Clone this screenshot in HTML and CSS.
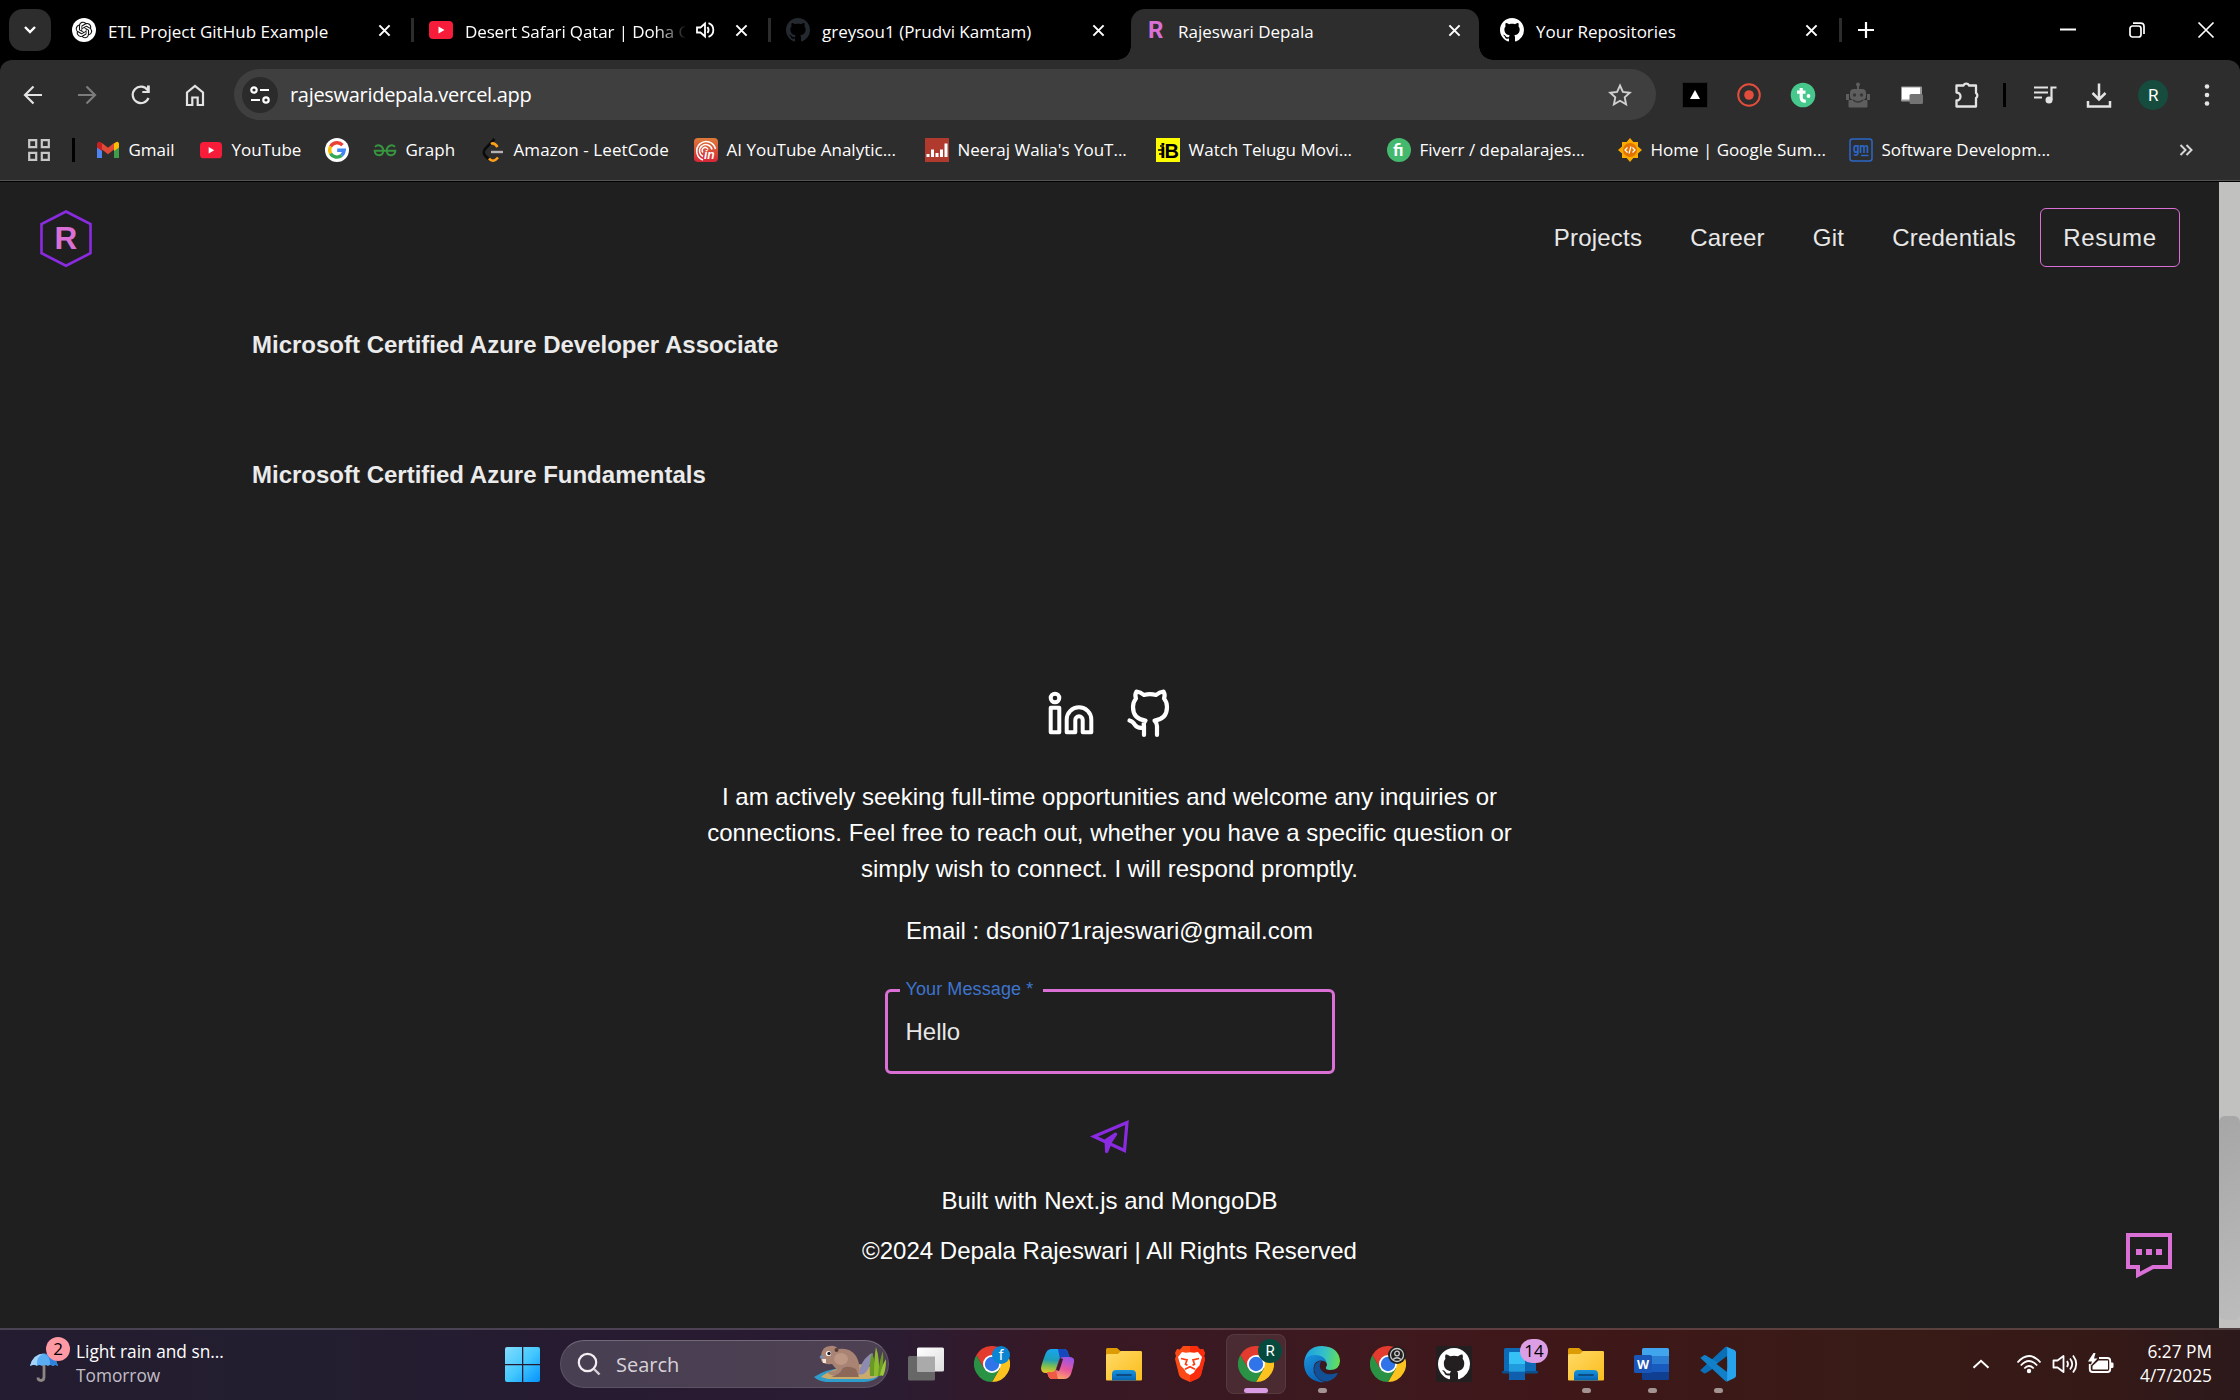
FILE: index.html
```html
<!DOCTYPE html>
<html lang="en">
<head>
<meta charset="utf-8">
<title>Rajeswari Depala</title>
<link rel="stylesheet" href="styles.css">
</head>
<body>
<svg class="sprite" aria-hidden="true">
  <defs>
    <linearGradient id="gFolder" x1="0" y1="0" x2="1" y2="1"><stop offset="0" stop-color="#ffda68"/><stop offset="1" stop-color="#fbbd1c"/></linearGradient>
    <linearGradient id="gBlue" x1="0" y1="0" x2="0" y2="1"><stop offset="0" stop-color="#1a94dc"/><stop offset="1" stop-color="#0663b4"/></linearGradient>
    <linearGradient id="gWin" x1="0" y1="0" x2="1" y2="1"><stop offset="0" stop-color="#83dcfd"/><stop offset=".5" stop-color="#44c8ff"/><stop offset="1" stop-color="#0493fb"/></linearGradient>
  </defs>
  <symbol id="x" viewBox="0 0 14 14"><path d="M1.500 1.500l11 11M12.500 1.500l-11 11" stroke="currentColor" stroke-width="2.200" fill="none"/></symbol>
  <symbol id="yt" viewBox="0 0 24 18"><rect width="24" height="18" rx="4" fill="#f61c3a"/><path d="M9.500 5.500l6 3.500-6 3.500z" fill="#fff"/></symbol>
  <symbol id="gh" viewBox="0 0 16 16"><path fill="currentColor" d="M8 0C3.580 0 0 3.580 0 8c0 3.540 2.290 6.530 5.470 7.590.4.070.55-.17.55-.38 0-.19-.01-.82-.01-1.490-2.010.37-2.530-.49-2.690-.94-.09-.23-.48-.94-.82-1.130-.28-.15-.68-.52-.01-.53.63-.01 1.080.58 1.230.82.72 1.210 1.870.87 2.330.66.07-.52.28-.87.51-1.070-1.780-.2-3.640-.89-3.640-3.950 0-.87.31-1.590.82-2.150-.08-.2-.36-1.020.08-2.120 0 0 .67-.21 2.200.82.64-.18 1.320-.27 2-.27s1.360.09 2 .27c1.530-1.040 2.200-.82 2.200-.82.44 1.100.16 1.920.08 2.120.51.56.82 1.270.82 2.150 0 3.070-1.870 3.750-3.650 3.950.29.25.54.73.54 1.480 0 1.070-.01 1.930-.01 2.200 0 .21.15.46.55.38A8.010 8.010 0 0 0 16 8c0-4.420-3.580-8-8-8z"/></symbol>
  <symbol id="chrome" viewBox="0 0 36 36">
    <path d="M18 9 H33.600 A18 18 0 0 1 18 36 L25.800 22.500Z" fill="#fcc31e"/>
    <path d="M2.400 9 A18 18 0 0 0 18 36 L25.800 22.500 L18 18 L10.200 22.500 Z" fill="#2a9245"/>
    <path d="M2.400 9 A18 18 0 0 1 33.600 9 H18 L10.200 22.500Z" fill="#e33b2e"/>
    <circle cx="18" cy="18" r="9" fill="#fff"/><circle cx="18" cy="18" r="7.200" fill="#2f74e8"/>
  </symbol>
  <symbol id="folder" viewBox="0 0 36 36"><path d="M0 3.500Q0 2 1.500 2H11l3.500 3H34.500Q36 5 36 6.500V12H0z" fill="#dd9b04"/><path d="M0 9.500Q0 8 1.500 8H12l3-3H34.500Q36 5 36 6.500V33.500Q36 34.500 35 34.500H1Q0 34.500 0 33.500z" fill="url(#gFolder)"/><path d="M6 34.500V28q0-4 4-4H26q4 0 4 4v6.500z" fill="url(#gBlue)"/><path d="M11 29H25" stroke="#0b4c85" stroke-width="1.800" stroke-linecap="round"/></symbol>
</svg>

<header class="tabstrip">
  <button class="tabsearch"><svg width="14" height="10" viewBox="0 0 14 10"><path d="M2 2l5 5 5-5" fill="none" stroke="#fff" stroke-width="2.400"/></svg></button>
  <div class="tab">
    <svg class="fav" viewBox="0 0 24 24"><circle cx="12" cy="12" r="12" fill="#fff"/><path transform="translate(3.700 3.700) scale(.69)" fill="#111" d="M22.2819 9.8211a5.9847 5.9847 0 0 0-.5157-4.9108 6.0462 6.0462 0 0 0-6.5098-2.9A6.0651 6.0651 0 0 0 4.9807 4.1818a5.9847 5.9847 0 0 0-3.9977 2.9 6.0462 6.0462 0 0 0 .7427 7.0966 5.98 5.98 0 0 0 .511 4.9107 6.051 6.051 0 0 0 6.5146 2.9001A5.9847 5.9847 0 0 0 13.2599 24a6.0557 6.0557 0 0 0 5.7718-4.2058 5.9894 5.9894 0 0 0 3.9977-2.9001 6.0557 6.0557 0 0 0-.7475-7.0729zm-9.022 12.6081a4.4755 4.4755 0 0 1-2.8764-1.0408l.1419-.0804 4.7783-2.7582a.7948.7948 0 0 0 .3927-.6813v-6.7369l2.02 1.1686a.071.071 0 0 1 .038.052v5.5826a4.504 4.504 0 0 1-4.4945 4.4944zm-9.6607-4.1254a4.4708 4.4708 0 0 1-.5346-3.0137l.142.0852 4.783 2.7582a.7712.7712 0 0 0 .7806 0l5.8428-3.3685v2.3324a.0804.0804 0 0 1-.0332.0615L9.74 19.9502a4.4992 4.4992 0 0 1-6.1408-1.6464zM2.3408 7.8956a4.485 4.485 0 0 1 2.3655-1.9728V11.6a.7664.7664 0 0 0 .3879.6765l5.8144 3.3543-2.0201 1.1685a.0757.0757 0 0 1-.071 0l-4.8303-2.7865A4.504 4.504 0 0 1 2.3408 7.872zm16.5963 3.8558L13.1038 8.364 15.1192 7.2a.0757.0757 0 0 1 .071 0l4.8303 2.7913a4.4944 4.4944 0 0 1-.6765 8.1042v-5.6772a.79.79 0 0 0-.407-.667zm2.0107-3.0231l-.142-.0852-4.7735-2.7818a.7759.7759 0 0 0-.7854 0L9.409 9.2297V6.8974a.0662.0662 0 0 1 .0284-.0615l4.8303-2.7866a4.4992 4.4992 0 0 1 6.6802 4.66zM8.3065 12.863l-2.02-1.1638a.0804.0804 0 0 1-.038-.0567V6.0742a4.4992 4.4992 0 0 1 7.3757-3.4537l-.142.0805L8.704 5.459a.7948.7948 0 0 0-.3927.6813zm1.0976-2.3654l2.602-1.4998 2.6069 1.4998v2.9994l-2.5974 1.4997-2.6067-1.4997Z"/></svg>
    <span class="tabtitle">ETL Project GitHub Example</span><svg class="tx"><use href="#x"/></svg>
  </div>
  <div class="tab sep">
    <svg class="fav"><use href="#yt" y="3" width="24" height="18"/></svg>
    <span class="tabtitle faded">Desert Safari Qatar | Doha C</span>
    <svg class="audio" viewBox="0 0 18 18"><path d="M1 6.500h3.500L9 2.500v13L4.500 11.500H1z" fill="none" stroke="#fff" stroke-width="1.800"/><path d="M11.500 6q2.200 3 0 6M12.500 2.200a7.200 7.200 0 0 1 0 13.600" fill="none" stroke="#fff" stroke-width="1.800"/></svg>
    <svg class="tx"><use href="#x"/></svg>
  </div>
  <div class="tab sep">
    <svg class="fav dim"><use href="#gh"/></svg>
    <span class="tabtitle">greysou1 (Prudvi Kamtam)</span><svg class="tx"><use href="#x"/></svg>
  </div>
  <div class="tab active">
    <span class="fav letter">R</span>
    <span class="tabtitle">Rajeswari Depala</span><svg class="tx"><use href="#x"/></svg>
  </div>
  <div class="tab last">
    <svg class="fav"><use href="#gh"/></svg>
    <span class="tabtitle">Your Repositories</span><svg class="tx"><use href="#x"/></svg>
  </div>
  <button class="newtab"><svg width="16" height="16" viewBox="0 0 16 16"><path d="M8 0v16M0 8h16" stroke="#fff" stroke-width="2.200"/></svg></button>
  <div class="wincontrols">
    <svg viewBox="0 0 16 16"><path d="M0 7.500h16" stroke="#fff" stroke-width="2"/></svg>
    <svg viewBox="0 0 16 16"><g fill="none" stroke="#fff" stroke-width="1.700"><rect x="1" y="4" width="11" height="11" rx="2.500"/><path d="M4 1.200H11.500Q15 1.200 15 4.500V12"/></g></svg>
    <svg viewBox="0 0 16 16"><path d="M.5.500l15 15M15.500.500l-15 15" stroke="#fff" stroke-width="1.700"/></svg>
  </div>
</header>

<div class="chromebar">
  <div class="toolbar">
    <svg viewBox="0 0 24 24"><path d="M21 12H4.500M12.500 3.500L4 12l8.500 8.500" fill="none" stroke="#e3e3e3" stroke-width="2.200"/></svg>
    <svg viewBox="0 0 24 24"><path d="M3 12H19.500M11.500 3.500L20 12l-8.500 8.500" fill="none" stroke="#7c7c7c" stroke-width="2.200"/></svg>
    <svg viewBox="0 0 24 24"><path d="M19.500 15A8.200 8.200 0 1 1 18.500 7" fill="none" stroke="#e3e3e3" stroke-width="2.200"/><path d="M20.800 2.500V10H13.300V8H18V2.500z" fill="#e3e3e3"/></svg>
    <svg viewBox="0 0 24 24"><path d="M4 22V9.500L12 3l8 6.500V22H14.700v-7.500H9.300V22z" fill="none" stroke="#e3e3e3" stroke-width="2.200"/></svg>
    <div class="omnibox">
      <span class="siteinfo"><svg width="20" height="18" viewBox="0 0 20 18"><g fill="none" stroke="#fff" stroke-width="2.200"><circle cx="4" cy="4" r="2.700"/><path d="M10 4h9M1 14h9"/><circle cx="16" cy="14" r="2.700"/></g></svg></span>
      <span class="url">rajeswaridepala.vercel.app</span>
      <svg class="star" viewBox="0 0 24 24"><path d="M12 2.500l2.900 6.400 6.900.8-5.100 4.700 1.400 6.900L12 17.800l-6.100 3.500 1.400-6.900L2.200 9.700l6.900-.8z" fill="none" stroke="#d0d0d0" stroke-width="1.900"/></svg>
    </div>
    <div class="exts">
      <svg viewBox="0 0 26 26"><rect x=".5" y=".5" width="25" height="25" fill="#000" stroke="#252525"/><path d="M13 8l5 9H8z" fill="#fff"/></svg>
      <svg viewBox="0 0 26 26"><circle cx="13" cy="13" r="10.800" fill="none" stroke="#e34d3c" stroke-width="2"/><circle cx="13" cy="13" r="4.800" fill="#e34d3c"/></svg>
      <svg viewBox="0 0 26 26"><circle cx="13" cy="13" r="12.300" fill="#46c78c"/><path d="M11.200 6v9.500q0 4 4.600 3.500M7 10.200h8.500" fill="none" stroke="#fff" stroke-width="3.200"/><circle cx="18.500" cy="14" r="1.900" fill="#fff"/></svg>
      <svg viewBox="0 0 26 26"><g fill="#5e5e5e"><rect x="5" y="7" width="16" height="11" rx="4"/><rect x="3.500" y="18" width="19" height="7.500" rx="1"/><circle cx="13" cy="2.500" r="2"/><path d="M12 3h2v5h-2zM1 12h3v6H1zM22 12h3v6h-3z"/></g><circle cx="9.500" cy="13" r="1.700" fill="#383838"/><circle cx="16.500" cy="13" r="1.700" fill="#383838"/><path d="M8 18q5 4 10 0" fill="none" stroke="#383838" stroke-width="1.500"/></svg>
      <svg viewBox="0 0 26 26"><rect x="2" y="4.500" width="21" height="15" rx="1" fill="#999"/><rect x="3" y="5.500" width="18" height="12" fill="#fff"/><rect x="10.500" y="12" width="13.500" height="10" rx="1.500" fill="#737373"/></svg>
      <svg viewBox="0 0 26 26"><path d="M3.500 3.500H10.500a3 3 0 0 1 5.500 0H23V11a3 3 0 0 1 0 5V24.500H3.500V18.500a4 4 0 0 0 0-8z" fill="none" stroke="#e3e3e3" stroke-width="2.300" stroke-linejoin="round"/></svg>
      <i class="vline"></i>
      <svg viewBox="0 0 26 26"><path d="M2 5.500h14M2 10.500h14M2 15.500h8M19.500 18V5.500H24.500" fill="none" stroke="#e3e3e3" stroke-width="2.200"/><circle cx="17" cy="18" r="3.500" fill="#e3e3e3"/></svg>
      <svg viewBox="0 0 26 26"><path d="M13 1.500V17M6.500 11l6.500 6.500 6.500-6.500M2 19v5.500h22V19" fill="none" stroke="#e3e3e3" stroke-width="2.500"/></svg>
      <span class="avatar">R</span>
      <svg viewBox="0 0 26 26"><g fill="#e3e3e3"><circle cx="13" cy="4.500" r="2.300"/><circle cx="13" cy="13" r="2.300"/><circle cx="13" cy="21.500" r="2.300"/></g></svg>
    </div>
  </div>
  <nav class="bookmarks">
    <svg class="apps" viewBox="0 0 22 22"><g fill="none" stroke="#c8c8c8" stroke-width="2.200"><path d="M1.200 1.200h7v7h-7zM13.800 1.200h7v7h-7zM1.200 13.800h7v7h-7zM13.800 13.800h7v7h-7z"/></g></svg>
    <i class="vline"></i>
    <a class="bm w-gmail"><svg viewBox="0 0 24 24"><path d="M1 6v14h5V10z" fill="#4f83f1"/><path d="M23 6v14h-5V10z" fill="#3f9c4b"/><path d="M18 10V5.500q4-3.500 5 0V9.500L18 13z" fill="#fbbc04"/><path d="M6 5l6 4.700L18 5v6.500l-6 4.700-6-4.700z" fill="#e04a37"/><path d="M1 9.500V6q1-4 5-1v8z" fill="#c5221f"/></svg><span>Gmail</span></a>
    <a class="bm w-yt"><svg viewBox="0 0 24 24"><use href="#yt" y="4" width="24" height="16.500"/></svg><span>YouTube</span></a>
    <a class="bm w-g"><svg viewBox="0 0 24 24"><circle cx="12" cy="12" r="12" fill="#fff"/><g fill="none" stroke-width="3.400"><path d="M17.500 7.200A7.300 7.300 0 0 0 5.600 8.500" stroke="#ea4335"/><path d="M5.600 8.500a7.300 7.300 0 0 0 0 7" stroke="#fbbc05"/><path d="M5.600 15.500a7.300 7.300 0 0 0 11 1.900" stroke="#34a853"/><path d="M16.600 17.400A7.300 7.300 0 0 0 19.200 12.200H12.200" stroke="#4285f4"/></g></svg></a>
    <a class="bm w-graph"><svg viewBox="0 0 24 24"><g fill="none" stroke="#37953f" stroke-width="1.900"><path d="M2 8.800Q4 6.800 6.500 7.500 10.800 9 10.300 13.500 9.500 17.300 6 17.300 2 17.200 1.600 12.700H22.400Q22 17.200 18 17.300 14.500 17.300 13.700 13.500 13.200 9 17.500 7.500 20 6.800 22 8.800"/></g></svg><span>Graph</span></a>
    <a class="bm w-leet"><svg viewBox="0 0 24 24"><path d="M13.500 1L4 11q-2.500 3.500 0 6.500l4 4" fill="none" stroke="#0b0b0b" stroke-width="2.600"/><path d="M10 6q3-2 6.500 3M8 20.500q4 5 9-1" fill="none" stroke="#ffa116" stroke-width="2.600"/><path d="M10 14h12" stroke="#b3b3b3" stroke-width="2.400"/></svg><span>Amazon - LeetCode</span></a>
    <a class="bm w-ai"><svg viewBox="0 0 24 24"><defs><linearGradient id="gAi" x1="0" y1="0" x2="0" y2="1"><stop offset="0" stop-color="#dd7a3a"/><stop offset="1" stop-color="#d72638"/></linearGradient></defs><rect width="24" height="24" rx="4" fill="url(#gAi)"/><g fill="none" stroke="#fff" stroke-width="1.500"><path d="M9 22A9.500 9.500 0 1 1 21.500 11M9 18.500a6.300 6.300 0 1 1 9-7M9 14.500a3 3 0 1 1 5-3"/></g><text x="10" y="21" font-size="12" font-weight="700" font-style="italic" fill="#fff" font-family="Liberation Sans, sans-serif">in</text></svg><span>AI YouTube Analytic...</span></a>
    <a class="bm w-n"><svg viewBox="0 0 24 24"><rect width="24" height="24" fill="#b03a2e"/><path d="M1.500 16h3v3h-3zM6 11.500h3V19H6zM10.500 15h3v4h-3zM15 11.500h3V19h-3zM19.500 5.500h3V19h-3z" fill="#fff"/></svg><span>Neeraj Walia's YouT...</span></a>
    <a class="bm w-n"><svg viewBox="0 0 24 24"><rect width="24" height="24" fill="#fdfd00"/><text x="4" y="19.500" font-size="20" font-weight="700" textLength="19" font-family="Liberation Sans, sans-serif">iB</text><path d="M4 8h4M2 12h5M3 16h4" stroke="#000" stroke-width="1.600"/></svg><span>Watch Telugu Movi...</span></a>
    <a class="bm w-n"><svg viewBox="0 0 24 24"><circle cx="12" cy="12" r="12" fill="#44b96e"/><text x="6" y="18" font-size="17" font-weight="900" textLength="12" fill="#fff" font-family="Lato, sans-serif">fi</text></svg><span>Fiverr / depalarajes...</span></a>
    <a class="bm w-n"><svg viewBox="0 0 24 24"><path d="M12 0l3.400 4H20v4.600L24 12l-4 3.400V20h-4.600L12 24l-3.400-4H4v-4.600L0 12l4-3.400V4h4.600z" fill="#f9ab00"/><circle cx="12" cy="12" r="7" fill="#e37400"/><path d="M9.500 9.500L7 12l2.500 2.500M14.500 9.500L17 12l-2.500 2.500M13 8.500l-2 7" fill="none" stroke="#fff" stroke-width="1.200"/></svg><span>Home | Google Sum...</span></a>
    <a class="bm w-gm"><svg viewBox="0 0 24 24"><rect x="1" y="1" width="22" height="22" rx="2.500" fill="none" stroke="#2b67c6" stroke-width="1.500"/><text x="4" y="14.500" font-size="14" font-weight="700" textLength="16" lengthAdjust="spacingAndGlyphs" fill="#2b67c6" font-family="Roboto, sans-serif">gm</text><path d="M12 17.500h7.500" stroke="#2b67c6" stroke-width="1.500"/></svg><span>Software Developm...</span></a>
    <svg class="more" viewBox="0 0 14 12"><path d="M1.500 1l5 5-5 5M7.500 1l5 5-5 5" fill="none" stroke="#d8d8d8" stroke-width="2"/></svg>
  </nav>
</div>

<div class="viewport">
  <main class="page">
    <div class="sitenav">
      <svg class="logo" viewBox="0 0 54 60"><path d="M27 3.500L51.500 16V45.200L27 57.700L2.500 45.200V16z" fill="none" stroke="#8a2be2" stroke-width="2.600"/><text x="26.800" y="40.500" text-anchor="middle" font-family="Liberation Sans, Arial, sans-serif" font-weight="700" font-size="31.500" fill="#da70d6">R</text></svg>
      <div class="links"><a>Projects</a><a>Career</a><a>Git</a><a>Credentials</a><a class="resume">Resume</a></div>
    </div>
    <section class="certs">
      <h3>Microsoft Certified Azure Developer Associate</h3>
      <h3>Microsoft Certified Azure Fundamentals</h3>
    </section>
    <section class="contact">
      <div class="social">
        <svg width="46" height="44" viewBox="0 0 46 44"><g fill="none" stroke="#fff" stroke-width="4" stroke-linejoin="round"><circle cx="7" cy="7" r="4.300"/><path d="M2.700 16.700h8.600V41.300H2.700zM18.700 41.300V28.500a12.300 12.300 0 0 1 24.600 0V41.300H34.700V29a3.700 3.700 0 0 0-7.400 0V41.300z"/></g></svg>
        <svg width="46" height="48" viewBox="0 0 46 48"><path d="M18 46V37q-1-3 1.500-5.500Q7 30 7 18q0-5 3-8.500Q8.500 6 10.500 2.500q4 .5 7.500 3.500 6-1.600 12 0 3.500-3 7.500-3.500 2 3.500.5 7 3 3.500 3 8.500 0 12-12.500 13.500Q31 34 31 37v9M18 38.500q-6 1.500-9-2.500-2-3.500-5.500-4.500" fill="none" stroke="#fff" stroke-width="4.200" stroke-linecap="round" stroke-linejoin="round"/></svg>
      </div>
      <p class="blurb">I am actively seeking full-time opportunities and welcome any inquiries or<br>connections. Feel free to reach out, whether you have a specific question or<br>simply wish to connect. I will respond promptly.</p>
      <p class="email">Email : dsoni071rajeswari@gmail.com</p>
      <div class="field"><span class="label">Your Message *</span><span class="value">Hello</span></div>
      <svg class="send" viewBox="0 0 40 36"><path d="M4 17.500L37 3.500L34.500 31.500z" fill="none" stroke="#8a2be2" stroke-width="3.200"/><path d="M14.500 20.500L25 13.500q3 0 2 2.500L22 23.500 18 33.500q-2 1.500-3-.5z" fill="#8a2be2"/></svg>
      <p class="built">Built with Next.js and MongoDB</p>
      <p class="copy">©2024 Depala Rajeswari | All Rights Reserved</p>
    </section>
    <svg class="chat" viewBox="0 0 46 46"><path d="M2 2H44V34H27L12 42V34H2z" fill="none" stroke="#da70d6" stroke-width="4"/><path d="M10 16h6v6h-6zM20 16h6v6h-6zM30 16h6v6h-6z" fill="#da70d6"/></svg>
  </main>
  <div class="scrollbar"><i></i></div>
</div>

<footer class="taskbar">
  <div class="weather">
    <span class="umb"><svg width="28" height="30" viewBox="0 0 28 30"><path d="M14 13V25q0 3.500-3 3.500T8 25.500" fill="none" stroke="#8d8684" stroke-width="2.800"/><path d="M0 14Q3 2 14 1.500 25 2 28 14q-3-2-5 0-3-2-5 0-3-2-6 0-3-2-5 0-3-2-7 0z" fill="#5aadf2"/><path d="M14 1.500Q6 4 7 13.500 4 12 0 14 3 2 14 1.500z" fill="#a6d3f9"/><path d="M14 1.500Q21 5 20 13q2-1 3 1 2-2 5 0Q25 2 14 1.500z" fill="#2f83dc"/></svg><b>2</b></span>
    <div class="wtext"><span>Light rain and sn...</span><span class="muted">Tomorrow</span></div>
  </div>
  <svg class="start" viewBox="0 0 35 35"><path d="M2 0H17V17H0V2Q0 0 2 0zM18.300 0H33Q35 0 35 2V17H18.300zM0 18.300H17V35H2Q0 35 0 33zM18.300 18.300H35V33Q35 35 33 35H18.300z" fill="url(#gWin)"/></svg>
  <div class="search">
    <svg width="24" height="24" viewBox="0 0 24 24"><circle cx="10.500" cy="10.500" r="8.700" fill="none" stroke="#f2eef2" stroke-width="2.200"/><path d="M17 17l5.500 5.500" stroke="#d6d0d6" stroke-width="2.400"/></svg>
    <span>Search</span>
    <svg class="beaver" viewBox="0 0 72 38"><path d="M0 32Q14 22 34 24H62L66 30Q60 37 50 37H12Q4 36 0 32z" fill="#2f9cc9"/><path d="M7 32Q18 22 50 19L66 26Q66 33 54 34H14z" fill="#c9ac6c"/><path d="M45 29Q46 17 55 10q3-3 4-1-2 10-6 17-4 5-8 3z" fill="#8d8cb0"/><path d="M7 11Q8 1 16 1q5-1 8 3 12-2 18 7 5 8 3 19H18q-5-1-4-3 6-1 9-2l-5-6Q8 20 7 15z" fill="#a98373"/><path d="M17 31q8 0 12-8 5-3 13 1l3 8H20z" fill="#8c6859"/><ellipse cx="27" cy="14" rx="7" ry="6" fill="#bd9684"/><circle cx="14.500" cy="8.500" r="2.600" fill="#fff"/><circle cx="15" cy="8.500" r="1.700" fill="#251b26"/><circle cx="22.500" cy="5" r="2" fill="#583c33"/><circle cx="7.500" cy="12" r="1.800" fill="#6d90b5"/><path d="M8 14h4v4H9z" fill="#f3e5db"/><g fill="#6b9a24"><path d="M56 31Q55 16 58 8q4 10 4 23z"/><path d="M60 31Q60 12 62 2q4 12 3 29z" fill="#8dbb30"/><path d="M64 31Q65 16 69 6q1 14-2 25z"/><path d="M66 30Q68 20 72 14q0 12-3 17z" fill="#9ac63c"/></g></svg>
  </div>
  <div class="apps-row">
    <span class="app"><svg viewBox="0 0 36 36"><defs><linearGradient id="gTv" x1="0" y1="0" x2="1" y2="1"><stop offset="0" stop-color="#fff"/><stop offset="1" stop-color="#dedede"/></linearGradient></defs><rect x="0" y="10" width="27" height="24.500" rx="1.500" fill="#676767"/><rect x="9" y="1.500" width="27" height="24" rx="1.500" fill="url(#gTv)"/><path d="M9 10.500H27V25.500H9z" fill="#aaa"/></svg></span>
    <span class="app"><svg><use href="#chrome"/></svg><b class="bdg f">f</b></span>
    <span class="app"><svg viewBox="0 0 36 36"><defs><linearGradient id="gc1" x1=".3" y1="0" x2=".2" y2="1"><stop offset="0" stop-color="#18a6f0"/><stop offset=".45" stop-color="#1f9fb6"/><stop offset=".7" stop-color="#78bd55"/><stop offset="1" stop-color="#f0c821"/></linearGradient><linearGradient id="gc2" x1=".7" y1="0" x2=".3" y2="1"><stop offset="0" stop-color="#9a55e8"/><stop offset=".5" stop-color="#e8579c"/><stop offset="1" stop-color="#ffb060"/></linearGradient></defs><path d="M15 3H24q3 0 4 4l1.500 4H23q-3 0-4 3L16 23q-1 4-5 4H6q-5 0-5-5Q1 20 5 9q2-6 6-6z" fill="url(#gc1)"/><path d="M18 3h6q3 0 4 4l1.500 4H23q-2 0-3 2z" fill="#1747bf"/><path d="M21 33H12q-3 0-4-4l-1-3h5q3 0 4-3L19 14q1-3 5-3h5q6 0 5 5-1 6-3 12-2 5-7 5z" fill="url(#gc2)"/><path d="M18 33h-6q-3 0-4-4l-1-3h5q3 0 4-2z" fill="#ee5a46"/><path d="M20 12l-4 12 3 1q2-5 4-12z" fill="#3b1a2a"/></svg></span>
    <span class="app"><svg><use href="#folder"/></svg></span>
    <span class="app"><svg viewBox="0 0 36 36"><path d="M11 0H25l3 3.500L31 3l2 4-1 3 1 3-4 16q-1 2-3 3.500L18 36l-8-3.500Q8 31 7 29L3 13l1-3-1-3 2-4 3 .5z" fill="#fb4a16"/><path d="M18 0h7l3 3.500L31 3l2 4-1 3 1 3-4 16q-1 2-3 3.500L18 36z" fill="#fa2c0c"/><path d="M10 6l4 .8Q18 5.500 22 6.800L26 6l4 5-2.500 8.500-4 4-1.500 3L18 29l-4-2.500-1.500-3-4-4L6 11z" fill="#fff"/><path d="M9 12.500l6 1.300-1.500 4.500 2 1M27 12.500l-6 1.300 1.500 4.500-2 1M13 23.200l5-2.500 5 2.500" fill="none" stroke="#fb3d12" stroke-width="1.700"/></svg></span>
    <span class="app on"><svg><use href="#chrome"/></svg><b class="bdg r">R</b><i class="ind"></i></span>
    <span class="app"><svg viewBox="0 0 36 36"><defs><linearGradient id="ge1" x1="0" y1=".5" x2="1" y2=".6"><stop offset="0" stop-color="#1b9de2"/><stop offset=".55" stop-color="#35c1c8"/><stop offset="1" stop-color="#66e04e"/></linearGradient><linearGradient id="ge2" x1="0" y1="0" x2=".5" y2="1"><stop offset="0" stop-color="#1b93dc"/><stop offset="1" stop-color="#0a63b8"/></linearGradient></defs><path d="M0 17Q2 0 18 0 35 1 36 15q-.5 9-10 9-5 0-4-3 2-2 0-5-4-6-12-4Q3 13 0 17z" fill="url(#ge1)"/><path d="M0 18Q1 9 11 9q9 0 11.500 7-8-4-12 2-3 8 3 14 3 3 7 4-3 .5-5 0Q1 33 0 18z" fill="url(#ge2)"/><path d="M18 14q-8 2-8 10 2 11 13 11.500 7-1.500 10.500-7.500.5-1.500-1-1-11 4-16-4-2-5 1.500-9z" fill="#114f96"/></svg><i class="dot"></i></span>
    <span class="app"><svg><use href="#chrome"/></svg><svg class="bdg guest" viewBox="0 0 18 18"><circle cx="9" cy="9" r="9" fill="#1f1f1f"/><circle cx="9" cy="9" r="6.500" fill="none" stroke="#c9c9c9" stroke-width="1.300"/><circle cx="9" cy="7.500" r="2.300" fill="none" stroke="#c9c9c9" stroke-width="1.300"/><path d="M5 13.500q4-3.500 8 0" fill="none" stroke="#c9c9c9" stroke-width="1.300"/></svg></span>
    <span class="app"><svg viewBox="0 0 36 36"><rect width="36" height="36" fill="#231f20"/><use href="#gh" x="2" y="2" width="32" height="32" color="#fff"/></svg></span>
    <span class="app"><svg viewBox="0 0 36 36"><rect x="2" y="2" width="32" height="24" rx="1.500" fill="#0d69b5"/><path d="M0 25H36v1q0 1.500-2 1.500H2Q0 27.500 0 26z" fill="#0b4f8d"/><rect x="7" y="6" width="16" height="28" rx="1" fill="#35c1f5"/><path d="M7 18H23v7.500H7z" fill="#1f9bde"/><path d="M7 25.500H23V33q0 1-1 1H8q-1 0-1-1z" fill="#0f5fae"/></svg><b class="bdg n14">14</b></span>
    <span class="app"><svg><use href="#folder"/></svg><i class="dot"></i></span>
    <span class="app"><svg viewBox="0 0 36 36"><path d="M8 10V3.500Q8 2 9.500 2h24Q35 2 35 3.500V10z" fill="#41a5ee"/><path d="M8 10H35v8H8z" fill="#2b7cd3"/><path d="M8 18H35v8H8z" fill="#185abd"/><path d="M8 26H35v6.500Q35 34 33.500 34h-24Q8 34 8 32.500z" fill="#103f91"/><rect y="9" width="18" height="18" rx="1.500" fill="#1a55b8"/><text x="9" y="22.500" text-anchor="middle" font-family="Open Sans, sans-serif" font-weight="700" font-size="12.500" fill="#fff">W</text></svg><i class="dot"></i></span>
    <span class="app"><svg viewBox="0 0 36 36"><path d="M1 23.500L25.500.8 30 3v9L6 27q-1.500 1-3-.5L.8 25q-.8-1 .2-1.500z" fill="#0b6fb8"/><path d="M1 12.500L25.500 35.200 30 33V24L6 9.500q-1.500-1-3 .5L.8 11.500q-.8.500.2 1z" fill="#1180c9"/><path d="M27 10L16.500 18 27 26z" fill="#3a1a17"/><path d="M26 .5L34.500 4Q36 5 36 6.500V29.500q0 1.500-1.500 2.500L26 36q1.200-1 1.200-3V3.500Q27.200 1.500 26 .5z" fill="#27a3ee"/></svg><i class="dot"></i></span>
  </div>
  <div class="tray">
    <svg width="18" height="10" viewBox="0 0 18 10"><path d="M1.500 8.800L9 1.800l7.500 7" fill="none" stroke="#fff" stroke-width="2"/></svg>
    <svg class="wifi" width="26" height="20" viewBox="0 0 26 20"><g fill="none" stroke="#fff" stroke-width="1.800"><path d="M1.500 8.500q11.500-13 23 0M4.800 11.500q8.200-9 16.400 0M8.300 14.500q4.700-5 9.400 0"/></g><circle cx="13" cy="17" r="2.200" fill="#fff"/></svg>
    <svg class="vol" width="26" height="22" viewBox="0 0 26 22"><g fill="none" stroke="#fff" stroke-width="1.800" stroke-linejoin="round"><path d="M1.500 7.500h4L11.500 3v16l-6-4.500h-4z"/><path d="M15 8q2 3 0 6M18 5.500q4.500 5.500 0 11M21 2.500q6.500 8.500 0 17"/></g></svg>
    <svg class="bat" width="26" height="22" viewBox="0 0 26 22"><path d="M11 5h8.500q2.700 0 2.700 2.700V16q0 3-2.700 3H4.500Q1.800 19 1.800 16v-5" fill="none" stroke="#fff" stroke-width="1.900"/><path d="M10.500 7.500H20V16.500H4.500V13z" fill="#fff"/><path d="M23 9.500h1.200q1.300 0 1.300 1.200v3q0 1.300-1.300 1.300H23z" fill="#fff"/><path d="M5.500 0L0 8.500h4L2.500 13 9.500 5.500H6L7.500 0z" fill="#fff"/></svg>
    <div class="clock"><span>6:27 PM</span><span>4/7/2025</span></div>
  </div>
</footer>
</body>
</html>
```

FILE: styles.css
```css
* { box-sizing: border-box; }
body { margin: 0; width: 2240px; height: 1400px; overflow: hidden; display: flex; flex-direction: column; background: #000; color: #fff; font-family: "Open Sans", "Noto Sans", sans-serif; }
svg { display: block; flex: none; overflow: visible; }
p, h3 { margin: 0; }
button { border: 0; padding: 0; background: none; display: grid; place-items: center; }
.sprite { position: absolute; width: 0; height: 0; }

/* tab strip */
.tabstrip { height: 60px; flex: none; display: flex; align-items: center; padding-left: 9px; background: #000; }
.tabsearch { width: 42px; height: 42px; border-radius: 14px; background: #2d2d2d; margin-right: 9px; }
.tab { width: 357px; height: 60px; display: flex; align-items: center; padding: 0 26px 0 12px; position: relative; flex: none; }
.tab.sep::before { content: ""; position: absolute; left: -6px; top: 18px; width: 3px; height: 24px; background: #2d2d2d; }
.fav { width: 24px; height: 24px; flex: none; margin-right: 12px; }
.dim { color: #24292f; }
.letter { width: 16px; margin: 0 14px 0 0; font: 700 24px/24px Roboto, sans-serif; color: #da70d6; }
.tabtitle { flex: 1; font-size: 17px; white-space: nowrap; line-height: 30px; padding-top: 3px; }
.faded { flex: none; width: 220px; letter-spacing: -0.12px; -webkit-mask-image: linear-gradient(90deg, #000 190px, transparent 222px); mask-image: linear-gradient(90deg, #000 190px, transparent 222px); }
.audio { width: 18px; height: 18px; margin: 0 auto 0 11px; }
.tx { width: 13px; height: 13px; }
.active { width: 348px; height: 51px; align-self: flex-end; background: #2d2d2d; border-radius: 14px 14px 0 0; padding: 0 18px 9px 17px; }
.active::before, .active::after { content: ""; position: absolute; bottom: 0; width: 14px; height: 14px; }
.active::before { left: -14px; background: radial-gradient(circle at 0 0, transparent 13.5px, #2d2d2d 14px); }
.active::after { right: -14px; background: radial-gradient(circle at 100% 0, transparent 13.5px, #2d2d2d 14px); }
.last { width: 360px; padding: 0 21px 0 21px; }
.last::after { content: ""; position: absolute; right: -3px; top: 18px; width: 3px; height: 24px; background: #2d2d2d; }
.newtab { width: 54px; height: 42px; }
.wincontrols { margin-left: auto; display: flex; gap: 53px; padding-right: 26px; }
.wincontrols svg { width: 16px; height: 16px; }

/* toolbar */
.chromebar { height: 122px; flex: none; background: #2d2d2d; border-radius: 12px 12px 0 0; border-bottom: 1px solid #000; box-shadow: inset 0 -1px #555; }
.toolbar { height: 69px; display: flex; align-items: center; padding-left: 21px; }
.toolbar > svg { width: 24px; height: 24px; margin-right: 30px; }
.omnibox { width: 1422px; height: 51px; border-radius: 26px; background: #3f3f3f; display: flex; align-items: center; padding: 0 24px 0 8px; margin-left: -3px; flex: none; }
.siteinfo { width: 36px; height: 36px; border-radius: 50%; background: #2b2b2b; display: grid; place-items: center; margin-right: 12px; }
.url { flex: 1; font-size: 20px; letter-spacing: -0.3px; }
.star { width: 24px; height: 24px; }
.exts { display: flex; align-items: center; margin-left: 26px; gap: 28.200px; }
.exts svg { width: 26px; height: 26px; }
.vline { width: 3px; height: 24px; background: #000; flex: none; }
.exts .vline { margin: 0 -2.500px 0 -4px; }
.avatar { width: 30px; height: 30px; margin: 0 -2px; border-radius: 50%; background: #164c3e; display: grid; place-items: center; font: 17px Roboto, sans-serif; }

/* bookmarks */
.bookmarks { display: flex; align-items: center; height: 42px; padding-left: 28px; }
.apps { width: 22px; height: 22px; margin-right: 22px; }
.bookmarks .vline { margin-right: 21px; }
.bm { display: flex; align-items: center; flex: none; }
.bm svg { width: 24px; height: 24px; margin-right: 8.500px; }
.bm span { font-size: 17px; white-space: nowrap; padding-bottom: 1.500px; }
.w-gmail { width: 103px; } .w-yt { width: 126px; } .w-g { width: 48px; } .w-graph { width: 108px; }
.w-leet { width: 213px; } .w-ai { width: 231px; } .w-n { width: 231px; } .w-gm { width: 330px; }
.w-leet span { letter-spacing: .1px; }
.more { width: 14px; height: 12px; }

/* page */
.viewport { flex: 1; display: flex; background: #1f1f1f; font-family: "Liberation Sans", Arial, sans-serif; font-size: 24px; line-height: 36px; }
.page { flex: 1; position: relative; }
.sitenav { display: flex; justify-content: space-between; align-items: center; padding: 26px 39px 0; height: 85px; color: #e8e8e8; }
.logo { width: 54px; height: 60px; }
.links { display: flex; align-items: center; letter-spacing: .22px; }
.links a { margin-right: 48px; }
.links a:nth-child(4) { margin-right: 24px; }
.links .resume { margin: 0; width: 140px; height: 59px; border: 1.5px solid #da70d6; border-radius: 6px; display: grid; place-items: center; letter-spacing: .68px; }
.certs { padding: 60px 0 0 252px; display: flex; flex-direction: column; gap: 94px; color: #ebebeb; }
.certs h3 { font-size: 24px; line-height: 36px; font-weight: 700; }
.contact { display: flex; flex-direction: column; align-items: center; text-align: center; padding-top: 196px; }
.social { display: flex; gap: 32px; align-items: center; }
.blurb { margin-top: 42px; }
.email { margin-top: 26px; }
.field { margin-top: 40px; width: 450px; height: 85px; border: 3px solid #da70d6; border-radius: 6px; position: relative; text-align: left; padding: 22px 18px; color: #e8e8e8; }
.label { position: absolute; left: 12px; top: -17px; width: 143px; padding-left: 6px; line-height: 28px; background: #1f1f1f; color: #3e74cd; font-size: 18px; letter-spacing: .1px; }
.send { width: 40px; height: 36px; margin-top: 45px; }
.built { margin-top: 28px; }
.copy { margin-top: 14px; }
.chat { position: absolute; right: 47px; bottom: 49px; width: 46px; height: 46px; }
.scrollbar { width: 21px; background: #c1c1bf; padding-top: 934px; }
.scrollbar i { display: block; height: 204px; border-radius: 6px; background: linear-gradient(160deg, #a6a6a6, #bcbcbc); }

/* taskbar */
.taskbar { height: 72px; flex: none; display: flex; align-items: center; padding-bottom: 2px; border-top: 2px solid rgba(255,255,255,.17); background: linear-gradient(90deg, #241c30 0, #221e2f 300px, #261b31 560px, #2b1c32 890px, #371825 1060px, #3d191f 1330px, #3f1719 1560px, #381b16 1880px, #351917 2100px, #2c191b 2240px); background-origin: border-box; }
.weather { width: 505px; display: flex; align-items: center; padding-left: 30px; }
.umb { width: 46px; height: 46px; position: relative; padding-top: 15px; margin-bottom: 8px; }
.umb b { position: absolute; left: 16px; top: 0; width: 24px; height: 24px; border-radius: 50%; background: #ff99a4; color: #000; font-weight: 400; font-size: 17px; line-height: 24px; text-align: center; }
.wtext, .clock { display: flex; flex-direction: column; font-size: 17.300px; line-height: 24px; }
.muted { color: #c3bfc6; }
.start { width: 35px; height: 35px; }
.search { width: 329px; height: 48px; margin-left: 20px; border-radius: 24px; background: rgba(255,255,255,.16); border: 1.5px solid rgba(255,255,255,.1); border-top-color: rgba(255,255,255,.22); display: flex; align-items: center; padding: 0 2px 0 16px; color: #d8d2d8; font-size: 20px; gap: 15px; }
.beaver { width: 72px; height: 38px; margin-left: auto; }
.apps-row { display: flex; gap: 6px; margin-left: 7px; }
.app { width: 60px; height: 60px; display: grid; place-items: center; position: relative; border-radius: 8px; }
.app > svg { width: 36px; height: 36px; }
.on { background: rgba(255,255,255,.08); box-shadow: inset 0 0 0 1px rgba(255,255,255,.07); }
.ind, .dot { position: absolute; bottom: 1px; left: 50%; height: 5px; border-radius: 3px; }
.ind { width: 24px; margin-left: -12px; background: #d99be3; }
.dot { width: 9px; margin-left: -4px; background: #a39391; }
.bdg { position: absolute; border-radius: 50%; font: 400 15px/18px Roboto, sans-serif; text-align: center; }
.bdg.f { left: 30px; top: 12px; width: 18px; height: 18px; background: #0b85d1; }
.bdg.r { left: 32px; top: 5px; width: 24px; height: 24px; background: #06493d; line-height: 24px; }
.app > .bdg.guest { left: 30px; top: 12px; width: 18px; height: 18px; }
.bdg.n14 { left: 30px; top: 5px; width: 28px; height: 24px; border-radius: 12px; background: #dc9ee4; color: #000; font: 17px/24px "Open Sans", sans-serif; }
.tray { margin-left: auto; display: flex; align-items: center; padding-right: 28px; }
.wifi { margin-left: 26px; }
.vol { margin-left: 10px; }
.bat { margin-left: 10px; }
.clock { text-align: right; width: 98px; }
```
